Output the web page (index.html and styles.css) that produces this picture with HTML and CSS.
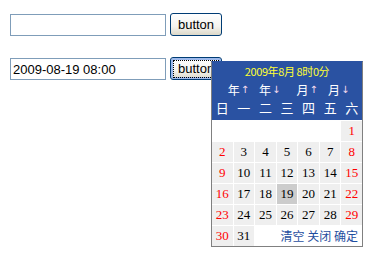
FILE: index.html
```html
<!DOCTYPE html>
<html lang="zh-CN">
<head>
  <meta charset="UTF-8">
  <meta name="viewport" content="width=device-width, initial-scale=1.0">
  <title>日期选择</title>
  <link rel="stylesheet" href="styles.css">
</head>
<body>
  <div class="page">
    <div class="field-row">
      <input class="text-input" type="text">
      <button class="btn">button</button>
    </div>
    <div class="field-row">
      <input class="text-input" type="text" value="2009-08-19 08:00">
      <button class="btn btn-focus"><span class="focus-ring">button</span></button>
    </div>

    <div class="calendar">
      <div class="cal-head">
        <div class="cal-title">2009年8月 8时0分</div>
        <div class="cal-nav">
          <span class="nav-group">
            <a>年<span class="arr">↑</span></a>
            <a>年<span class="arr">↓</span></a>
          </span>
          <span class="nav-group">
            <a>月<span class="arr">↑</span></a>
            <a>月<span class="arr">↓</span></a>
          </span>
        </div>
        <div class="cal-week">
          <span>日</span><span>一</span><span>二</span><span>三</span><span>四</span><span>五</span><span>六</span>
        </div>
      </div>

      <div class="cal-days">
        <span class="blank"></span><span class="blank"></span><span class="blank"></span>
        <span class="blank"></span><span class="blank"></span><span class="blank"></span>
        <span class="day wkend">1</span>

        <span class="day wkend">2</span><span class="day">3</span><span class="day">4</span>
        <span class="day">5</span><span class="day">6</span><span class="day">7</span>
        <span class="day wkend">8</span>

        <span class="day wkend">9</span><span class="day">10</span><span class="day">11</span>
        <span class="day">12</span><span class="day">13</span><span class="day">14</span>
        <span class="day wkend">15</span>

        <span class="day wkend">16</span><span class="day">17</span><span class="day">18</span>
        <span class="day selected">19</span><span class="day">20</span><span class="day">21</span>
        <span class="day wkend">22</span>

        <span class="day wkend">23</span><span class="day">24</span><span class="day">25</span>
        <span class="day">26</span><span class="day">27</span><span class="day">28</span>
        <span class="day wkend">29</span>

        <span class="day wkend">30</span><span class="day">31</span>
        <div class="cal-actions">
          <a>清空</a> <a>关闭</a> <a>确定</a>
        </div>
      </div>
    </div>
  </div>
</body>
</html>
```

FILE: styles.css
```css
html, body {
  height: 100%;
}
body {
  margin: 0;
  padding: 0;
  background-color: #fff;
  font-family: "Liberation Sans", Arial, sans-serif;
}
.page {
  position: relative;
  box-sizing: border-box;
  min-height: 256px;
  padding: 13px 0 0 10px;
}
.field-row {
  display: flex;
  align-items: flex-start;
  gap: 4px;
  margin-bottom: 21px;
}
.text-input {
  box-sizing: border-box;
  width: 156px;
  height: 22px;
  margin: 1px 0 0 0;
  padding: 0 2px;
  border: 1px solid #7f9db9;
  font-family: "Liberation Sans", Arial, sans-serif;
  font-size: 13px;
  color: #000;
  outline: none;
}
.btn {
  box-sizing: border-box;
  width: 52px;
  height: 23px;
  padding: 0;
  border: 1px solid #003c74;
  border-radius: 3px;
  background: linear-gradient(#ffffff, #f4f3ee 60%, #dcd8c8);
  font-family: "Liberation Sans", Arial, sans-serif;
  font-size: 13px;
  color: #000;
}
.btn-focus {
  box-shadow: inset 0 0 0 2px #9db9eb;
  overflow: hidden;
}
.focus-ring {
  display: block;
  margin: 2px;
  padding: 1px 0 0 4px;
  height: 15px;
  border: 1px dotted #000;
  text-align: left;
  line-height: 14px;
}

/* popup calendar */
.calendar {
  position: absolute;
  left: 211px;
  top: 61px;
  width: 150px;
  border: 1px solid #808080;
  border-top: 1px solid #2a52a2;
  background-color: #fff;
  font-family: "Noto Sans CJK SC", sans-serif;
}
.cal-head {
  height: 58px;
  background-color: #2a52a2;
  color: #fff;
  font-size: 11px;
}
.cal-title {
  height: 19px;
  line-height: 19px;
  text-align: center;
  color: #ffff33;
  letter-spacing: -0.4px;
}
.cal-nav {
  display: flex;
  justify-content: center;
  gap: 16px;
  height: 18px;
  line-height: 18px;
  padding-left: 3px;
  font-size: 12px;
}
.nav-group {
  display: flex;
  gap: 10px;
}
.cal-nav a {
  display: flex;
  align-items: center;
}
.arr {
  font-family: "DejaVu Sans", sans-serif;
  font-size: 10px;
  color: #f6dcee;
  margin-left: 1px;
}
.cal-week {
  display: grid;
  grid-template-columns: repeat(7, 1fr);
  gap: 1px;
  height: 18px;
  line-height: 18px;
  text-align: center;
  font-size: 13px;
}
.cal-days {
  display: grid;
  grid-template-columns: repeat(7, 1fr);
  grid-auto-rows: 20px;
  gap: 1px;
  padding-top: 1px;
  font-family: "Liberation Serif", "Times New Roman", serif;
  font-size: 13px;
}
.day {
  background-color: #efefef;
  color: #000;
  text-align: center;
  line-height: 20px;
}
.wkend {
  color: #ff0000;
}
.selected {
  background-color: #cccccc;
}
.cal-actions {
  grid-column: span 5;
  text-align: right;
  padding-right: 4px;
  line-height: 20px;
  font-family: "Noto Sans CJK SC", sans-serif;
  font-size: 12px;
  color: #1f4ea0;
}
```
